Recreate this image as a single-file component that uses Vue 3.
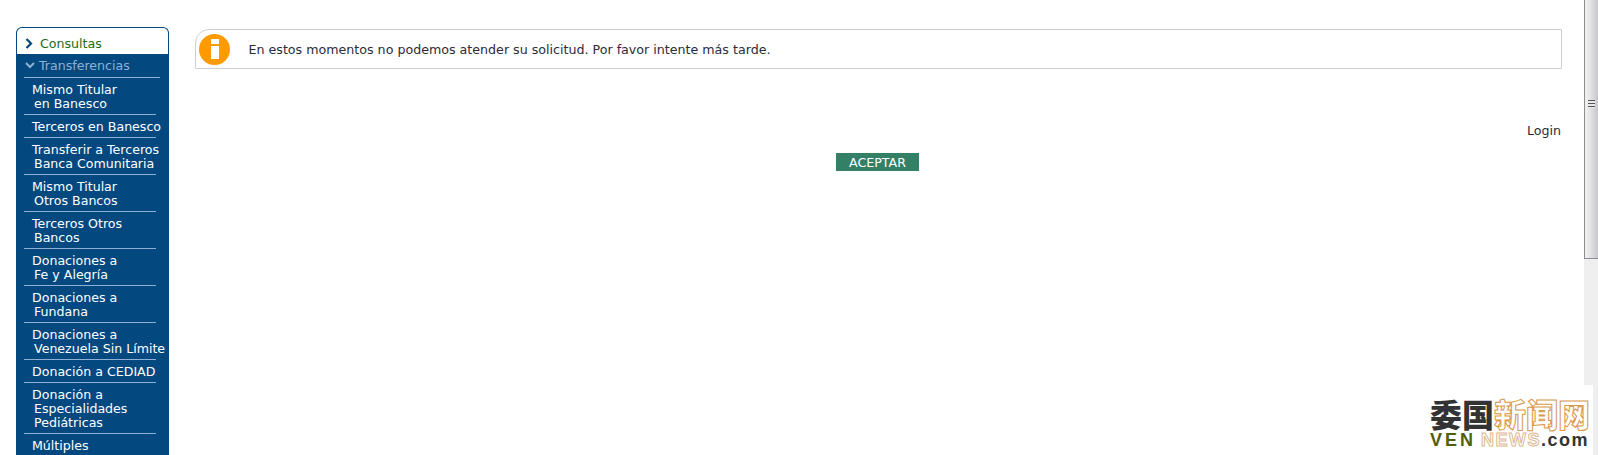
<script setup>
const opciones = [
  ['Mismo Titular', 'en Banesco'],
  ['Terceros en Banesco'],
  ['Transferir a Terceros', 'Banca Comunitaria'],
  ['Mismo Titular', 'Otros Bancos'],
  ['Terceros Otros', 'Bancos'],
  ['Donaciones a', 'Fe y Alegría'],
  ['Donaciones a', 'Fundana'],
  ['Donaciones a', 'Venezuela Sin Límite'],
  ['Donación a CEDIAD'],
  ['Donación a', 'Especialidades', 'Pediátricas'],
  ['Múltiples']
]
</script>

<template>
  <div class="pagina">
    <aside class="menu">
      <div class="consultas">
        <svg class="flecha" width="8" height="11" viewBox="0 0 8 11">
          <path d="M1.5 1 L6 5.5 L1.5 10" fill="none" stroke="#03477c" stroke-width="2.2" />
        </svg>
        <span>Consultas</span>
      </div>
      <div class="transferencias">
        <div class="cabecera">
          <svg class="flecha-abajo" width="10" height="7" viewBox="0 0 10 7">
            <path d="M1 1 L5 5 L9 1" fill="none" stroke="#8fb0d6" stroke-width="2" />
          </svg>
          <span>Transferencias</span>
        </div>
        <ul>
          <li v-for="(lineas, i) in opciones" :key="i">
            <span v-for="(linea, j) in lineas" :key="j" :class="{ sangria: j > 0 }">{{ linea }}</span>
          </li>
        </ul>
      </div>
    </aside>

    <main class="contenido">
      <div class="alerta">
        <div class="icono"><i></i><b></b></div>
        <p>En estos momentos no podemos atender su solicitud. Por favor intente más tarde.</p>
      </div>
      <div class="login">Login</div>
      <div class="acciones">
        <button type="button">ACEPTAR</button>
      </div>
    </main>

    <div class="scrollbar">
      <div class="thumb">
        <div class="grip"></div>
      </div>
    </div>

    <div class="marca">
      <div class="marca-cn"><span class="oscuro">委国</span><span class="hueco">新闻网</span></div>
      <div class="marca-en"><span class="verde">VEN</span><span class="hueco-en">NEWS</span><span class="oscuro">.com</span></div>
    </div>
  </div>
</template>

<style>
html, body {
  margin: 0;
  height: 100%;
  overflow: hidden;
  background: #fff;
}
</style>

<style scoped>
.pagina {
  display: flex;
  height: 455px;
  overflow: hidden;
  position: relative;
  font-family: "DejaVu Sans", Verdana, sans-serif;
  font-size: 12.65px;
  color: #2b2b3a;
}
.menu {
  flex: none;
  width: 153px;
  margin: 27px 0 0 16px;
  background: #03487f;
  border: 1px solid #03487f;
  border-bottom: none;
  border-radius: 6px 6px 0 0;
  box-sizing: border-box;
  height: 470px;
  font-size: 12.6px;
}
.consultas {
  display: flex;
  align-items: center;
  height: 26px;
  background: #fff;
  border-radius: 5px 5px 0 0;
  color: #1a6b1a;
  padding-top: 4px;
  box-sizing: border-box;
}
.flecha {
  margin: 0 7px 0 8px;
}
.transferencias {
  color: #fff;
}
.cabecera {
  display: flex;
  align-items: center;
  height: 24px;
  margin: 0 8px 0 7px;
  padding-left: 1px;
  border-bottom: 1px solid #8fb0d6;
  color: #8fb0d6;
  box-sizing: border-box;
}
.flecha-abajo {
  margin-right: 4px;
}
ul {
  list-style: none;
  margin: 0 0 0 7px;
  padding: 0;
  width: 132px;
  white-space: nowrap;
}
li {
  padding: 5px 0 3px 8px;
  line-height: 14px;
  border-bottom: 1px solid #8fb0d6;
}
li span {
  display: block;
}
.sangria {
  margin-left: 2px;
}
.contenido {
  flex: 1;
  min-width: 0;
  padding: 29px 22px 0 26px;
}
.alerta {
  display: flex;
  align-items: center;
  height: 40px;
  border: 1px solid #cfcfcf;
  border-top-left-radius: 14px;
  box-sizing: border-box;
}
.icono {
  flex: none;
  width: 31px;
  height: 31px;
  margin-left: 3px;
  border-radius: 50%;
  background: #ff9a00;
  display: flex;
  flex-direction: column;
  align-items: center;
  padding-top: 5px;
  box-sizing: border-box;
}
.icono i {
  width: 8px;
  height: 5px;
  background: #fff;
}
.icono b {
  width: 8px;
  height: 13px;
  margin-top: 2px;
  background: #fff;
}
.alerta p {
  margin: 0 0 0 18.5px;
}
.login {
  margin-top: 54px;
  text-align: right;
  line-height: 16px;
  padding-right: 1px;
}
.acciones {
  display: flex;
  justify-content: center;
  margin-top: 14px;
  padding-right: 3px;
}
button {
  width: 83px;
  height: 18px;
  padding: 0 0 0 1px;
  border: none;
  background: #338066;
  color: #fff;
  font-family: inherit;
  font-size: 12.6px;
  cursor: pointer;
}
.scrollbar {
  flex: none;
  width: 14px;
  background: #efefef;
}
.thumb {
  height: 259px;
  box-sizing: border-box;
  border: 1px solid #8e8e8e;
  border-top: none;
  border-right: none;
  background: linear-gradient(to right, #f2f2f2, #e4e4e4 40%, #c6c6ce);
  display: flex;
  justify-content: center;
  padding-top: 100px;
}
.grip {
  width: 7px;
  height: 8px;
  background: repeating-linear-gradient(to bottom, #555 0 1px, #e8e8e8 1px 3px);
}
.marca {
  position: absolute;
  right: 5px;
  bottom: 0;
  width: 166px;
  height: 70px;
  background: #fff;
  padding: 12px 0 0 3px;
  box-sizing: border-box;
  font-family: "Noto Sans CJK SC", "Liberation Sans", sans-serif;
  font-weight: 900;
}
.marca-cn {
  font-size: 32px;
  line-height: 32px;
  white-space: nowrap;
}
.oscuro {
  color: #333;
}
.hueco {
  color: #fff;
  -webkit-text-stroke: 1px #d9984a;
}
.marca-en {
  margin-top: 3px;
  font-family: "Liberation Sans", sans-serif;
  font-weight: 700;
  font-size: 18px;
  line-height: 16px;
  white-space: nowrap;
}
.verde {
  color: #4f5f0c;
  letter-spacing: 3px;
  margin-right: 5px;
}
.hueco-en {
  color: #fff;
  -webkit-text-stroke: 1px #e0b890;
  letter-spacing: 1.5px;
}
.marca-en .oscuro {
  letter-spacing: 1.5px;
}
</style>
